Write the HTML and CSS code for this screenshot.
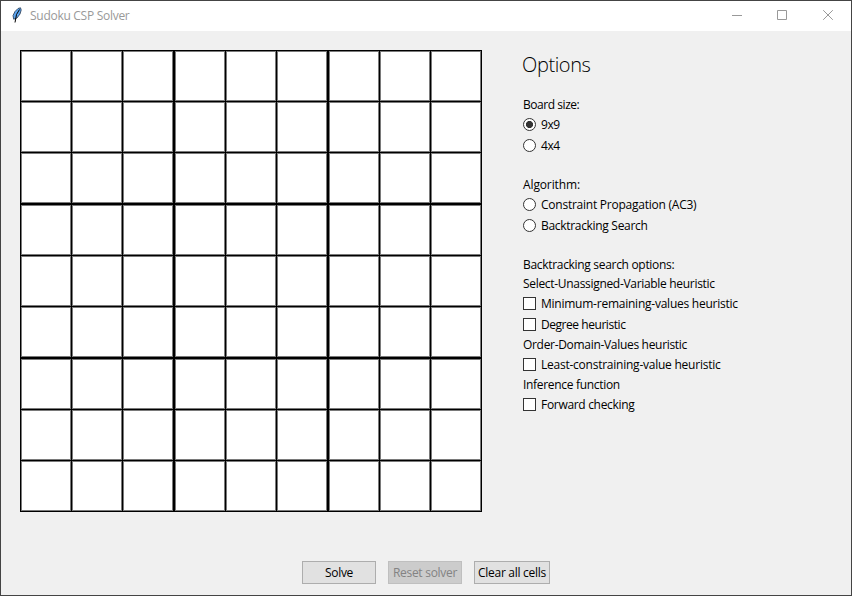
FILE: index.html
```
<!DOCTYPE html>
<html lang="en">
<head>
<meta charset="utf-8">
<title>Sudoku CSP Solver</title>
<link rel="stylesheet" href="styles.css">
</head>
<body>
<div class="window">
  <header class="titlebar">
    <svg class="feather" width="16" height="16" viewBox="0 0 16 16"><path d="M11.5.8 9 1.5 6 4.5 4 8.5l.7 3.7L8 11l3-4 1.2-4z" fill="#5ba4ef" stroke="#26364c" stroke-width=".8"/><path d="M10.5 2.5 7.5 7.5 6 15.5" fill="none" stroke="#000" stroke-width="1"/></svg>
    <span class="title">Sudoku CSP Solver</span>
    <svg class="controls" width="102" height="12" viewBox="0 0 102 12" fill="none" stroke="#999"><path d="M0 6.5h10M45.5 1.5h9v9h-9z"/><path d="M91.2 1.2l9.6 9.6M100.8 1.2l-9.6 9.6"/></svg>
  </header>
  <main class="content">
    <div class="board" id="board"></div>
    <section class="options">
      <h1>Options</h1>
      <div class="group">
        <div class="heading"><span class="tighter">Board size:</span></div>
        <div class="option"><i class="radio checked"></i><span class="tighter">9x9</span></div>
        <div class="option"><i class="radio"></i><span class="tighter">4x4</span></div>
      </div>
      <div class="group">
        <div class="heading"><span class="loose">Algorithm:</span></div>
        <div class="option"><i class="radio"></i><span>Constraint Propagation (AC3)</span></div>
        <div class="option"><i class="radio"></i><span class="tight">Backtracking Search</span></div>
      </div>
      <div class="group">
        <div class="heading"><span class="tight">Backtracking search options:</span></div>
        <div class="label"><span class="tight">Select-Unassigned-Variable heuristic</span></div>
        <div class="option"><i class="check"></i><span>Minimum-remaining-values heuristic</span></div>
        <div class="option"><i class="check"></i><span class="tighter">Degree heuristic</span></div>
        <div class="label"><span class="tight">Order-Domain-Values heuristic</span></div>
        <div class="option"><i class="check"></i><span>Least-constraining-value heuristic</span></div>
        <div class="label"><span class="tight">Inference function</span></div>
        <div class="option"><i class="check"></i><span class="tight">Forward checking</span></div>
      </div>
    </section>
  </main>
  <footer class="actions">
    <button>Solve</button>
    <button disabled>Reset solver</button>
    <button class="wide">Clear all cells</button>
  </footer>
</div>
<script src="board.js"></script>
</body>
</html>
```
FILE: styles.css
```
* { box-sizing: border-box; }
body { margin: 0; font: 12px/16px "Open Sans", "Noto Sans", sans-serif; color: #000; }
.window { width: 852px; height: 596px; border: 1px solid #444; background: #f0f0f0; display: flex; flex-direction: column; overflow: hidden; }
.titlebar { height: 30px; background: #fff; display: flex; align-items: flex-start; padding: 0 17px 0 8px; }
.feather { margin-top: 6px; }
.title { margin: 7px 0 0 5px; color: #999; letter-spacing: -0.28px; white-space: nowrap; }
.controls { margin: 8px 0 0 auto; }
.content { display: flex; gap: 41px; padding: 19px 0 0 19px; height: 530px; }
.board { width: 462px; height: 462px; padding: 1px; background: #000; display: grid; grid-template-columns: repeat(3, 152px); grid-template-rows: repeat(3, 152px); gap: 2px; }
.box { display: grid; grid-template-columns: repeat(3, 50px); grid-template-rows: repeat(3, 50px); gap: 1px; }
.cell { background: #fff; border: 1px solid #7a7a7a; }
.options { white-space: nowrap; letter-spacing: -0.24px; }
h1 { margin: 0 0 0 -1px; padding-top: 1px; height: 45px; font: 300 20px/28px "Open Sans", sans-serif; letter-spacing: -0.4px; }
.group { margin-bottom: 18px; }
.heading { height: 20px; padding-top: 2px; }
.label { height: 19px; padding-top: 1px; }
.option { height: 21px; padding-top: 2px; display: flex; gap: 5px; }
.loose { letter-spacing: -0.12px; }
.tight { letter-spacing: -0.31px; }
.tighter { letter-spacing: -0.45px; }
.radio, .check { width: 13px; height: 13px; margin-top: 1px; border: 1px solid #333; background: #fff; }
.radio { border-radius: 50%; }
.checked { background: radial-gradient(circle, #333 3.2px, #fff 3.9px); }
.actions { display: flex; gap: 12px; padding-left: 301px; }
button { width: 74px; height: 23px; padding: 0; border: 1px solid #adadad; background: #e1e1e1; color: #000; font: inherit; letter-spacing: -0.28px; white-space: nowrap; }
button:disabled { border-color: #bfbfbf; background: #ccc; color: #838383; }
.wide { width: 76px; }
```
FILE: board.js
```
const board = document.getElementById("board");
for (let b = 0; b < 9; b++) {
  const box = document.createElement("div");
  box.className = "box";
  for (let c = 0; c < 9; c++) {
    const cell = document.createElement("div");
    cell.className = "cell";
    box.append(cell);
  }
  board.append(box);
}
```
